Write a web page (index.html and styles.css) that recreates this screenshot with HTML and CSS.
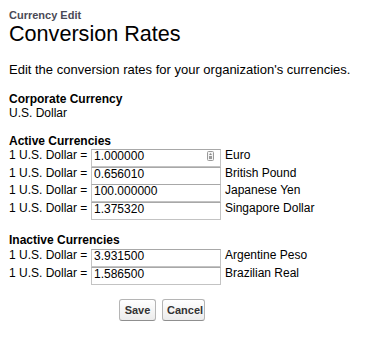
FILE: index.html
```html
<!DOCTYPE html>
<html>
<head>
<meta charset="utf-8">
<link rel="stylesheet" href="styles.css">
</head>
<body>
<div class="page">
  <div class="crumb">Currency Edit</div>
  <h1 class="title">Conversion Rates</h1>
  <p class="intro">Edit the conversion rates for your organization's currencies.</p>

  <div class="section corp">
    <div class="sec-title">Corporate Currency</div>
    <div class="sec-value">U.S. Dollar</div>
  </div>

  <div class="section active">
    <div class="sec-title">Active Currencies</div>
    <div class="rates">
      <div class="row"><span class="lbl">1 U.S. Dollar =</span><span class="field"><input class="inp" value="1.000000"><span class="spin"><svg width="7" height="10" viewBox="0 0 7 10"><rect x="0.5" y="0.5" width="6" height="9" rx="1" fill="#f4f4f4" stroke="#9a9a9a"/><path d="M3.5 2 L5 4 H2 Z" fill="#8a8a8a"/><rect x="2" y="5" width="3" height="3" fill="#9a9a9a"/></svg></span></span><span class="cur">Euro</span></div>
      <div class="row"><span class="lbl">1 U.S. Dollar =</span><span class="field"><input class="inp" value="0.656010"></span><span class="cur">British Pound</span></div>
      <div class="row"><span class="lbl">1 U.S. Dollar =</span><span class="field"><input class="inp" value="100.000000"></span><span class="cur">Japanese Yen</span></div>
      <div class="row"><span class="lbl">1 U.S. Dollar =</span><span class="field"><input class="inp" value="1.375320"></span><span class="cur">Singapore Dollar</span></div>
    </div>
  </div>

  <div class="section inactive">
    <div class="sec-title">Inactive Currencies</div>
    <div class="rates">
      <div class="row"><span class="lbl">1 U.S. Dollar =</span><span class="field"><input class="inp" value="3.931500"></span><span class="cur">Argentine Peso</span></div>
      <div class="row"><span class="lbl">1 U.S. Dollar =</span><span class="field"><input class="inp" value="1.586500"></span><span class="cur">Brazilian Real</span></div>
    </div>
  </div>

  <div class="actions">
    <button class="btn save">Save</button>
    <button class="btn cancel">Cancel</button>
  </div>
</div>
</body>
</html>
```

FILE: styles.css
```css
html, body {
  margin: 0;
  padding: 0;
  background: #ffffff;
}
body {
  font-family: "Liberation Sans", Arial, sans-serif;
  color: #000000;
}
.page {
  padding: 9px 9px 0 9px;
}
.crumb {
  font-size: 11px;
  font-weight: bold;
  color: #4a4a56;
  line-height: 13px;
}
.title {
  margin: 0;
  font-size: 21.6px;
  font-weight: normal;
  line-height: 24px;
  color: #000;
}
.intro {
  margin: 15.5px 0 0 0;
  font-size: 13px;
  line-height: 16.5px;
}
.section {
  margin-top: 14px;
}
.sec-title {
  font-size: 12px;
  font-weight: bold;
  line-height: 14px;
}
.sec-value {
  font-size: 12px;
  line-height: 14px;
}
.rates {
  display: flex;
  flex-direction: column;
  margin-top: 1px;
}
.inactive .rates {
  margin-top: 2px;
}
.row {
  display: flex;
  align-items: flex-start;
  height: 17.5px;
  font-size: 12px;
}
.lbl {
  width: 82px;
  white-space: nowrap;
  line-height: 12px;
}
.field {
  position: relative;
  display: block;
  width: 130px;
  height: 18px;
}
.inp {
  box-sizing: border-box;
  width: 130px;
  height: 18px;
  margin: 0;
  padding: 0 0 4px 2px;
  border: 1px solid #c3c3c3;
  border-top-color: #a8a8a8;
  font-family: "Liberation Sans", Arial, sans-serif;
  font-size: 12px;
  color: #000;
  background: #fff;
  outline: none;
  display: block;
}
.spin {
  position: absolute;
  right: 7px;
  top: 2px;
  display: block;
  line-height: 0;
}
.cur {
  margin-left: 4px;
  white-space: nowrap;
  line-height: 12px;
}
.actions {
  display: flex;
  justify-content: flex-start;
  gap: 6px;
  margin-top: 15px;
  padding-left: 110px;
}
.btn {
  box-sizing: border-box;
  height: 22px;
  padding: 0 4px;
  border: 1px solid #b5b5b5;
  border-bottom-color: #8f8f8f;
  border-radius: 3px;
  background: linear-gradient(#ffffff, #ececec);
  font-family: "Liberation Sans", Arial, sans-serif;
  font-size: 11px;
  font-weight: bold;
  color: #333333;
}
.save {
  width: 37px;
}
.cancel {
  width: 43px;
}
```
